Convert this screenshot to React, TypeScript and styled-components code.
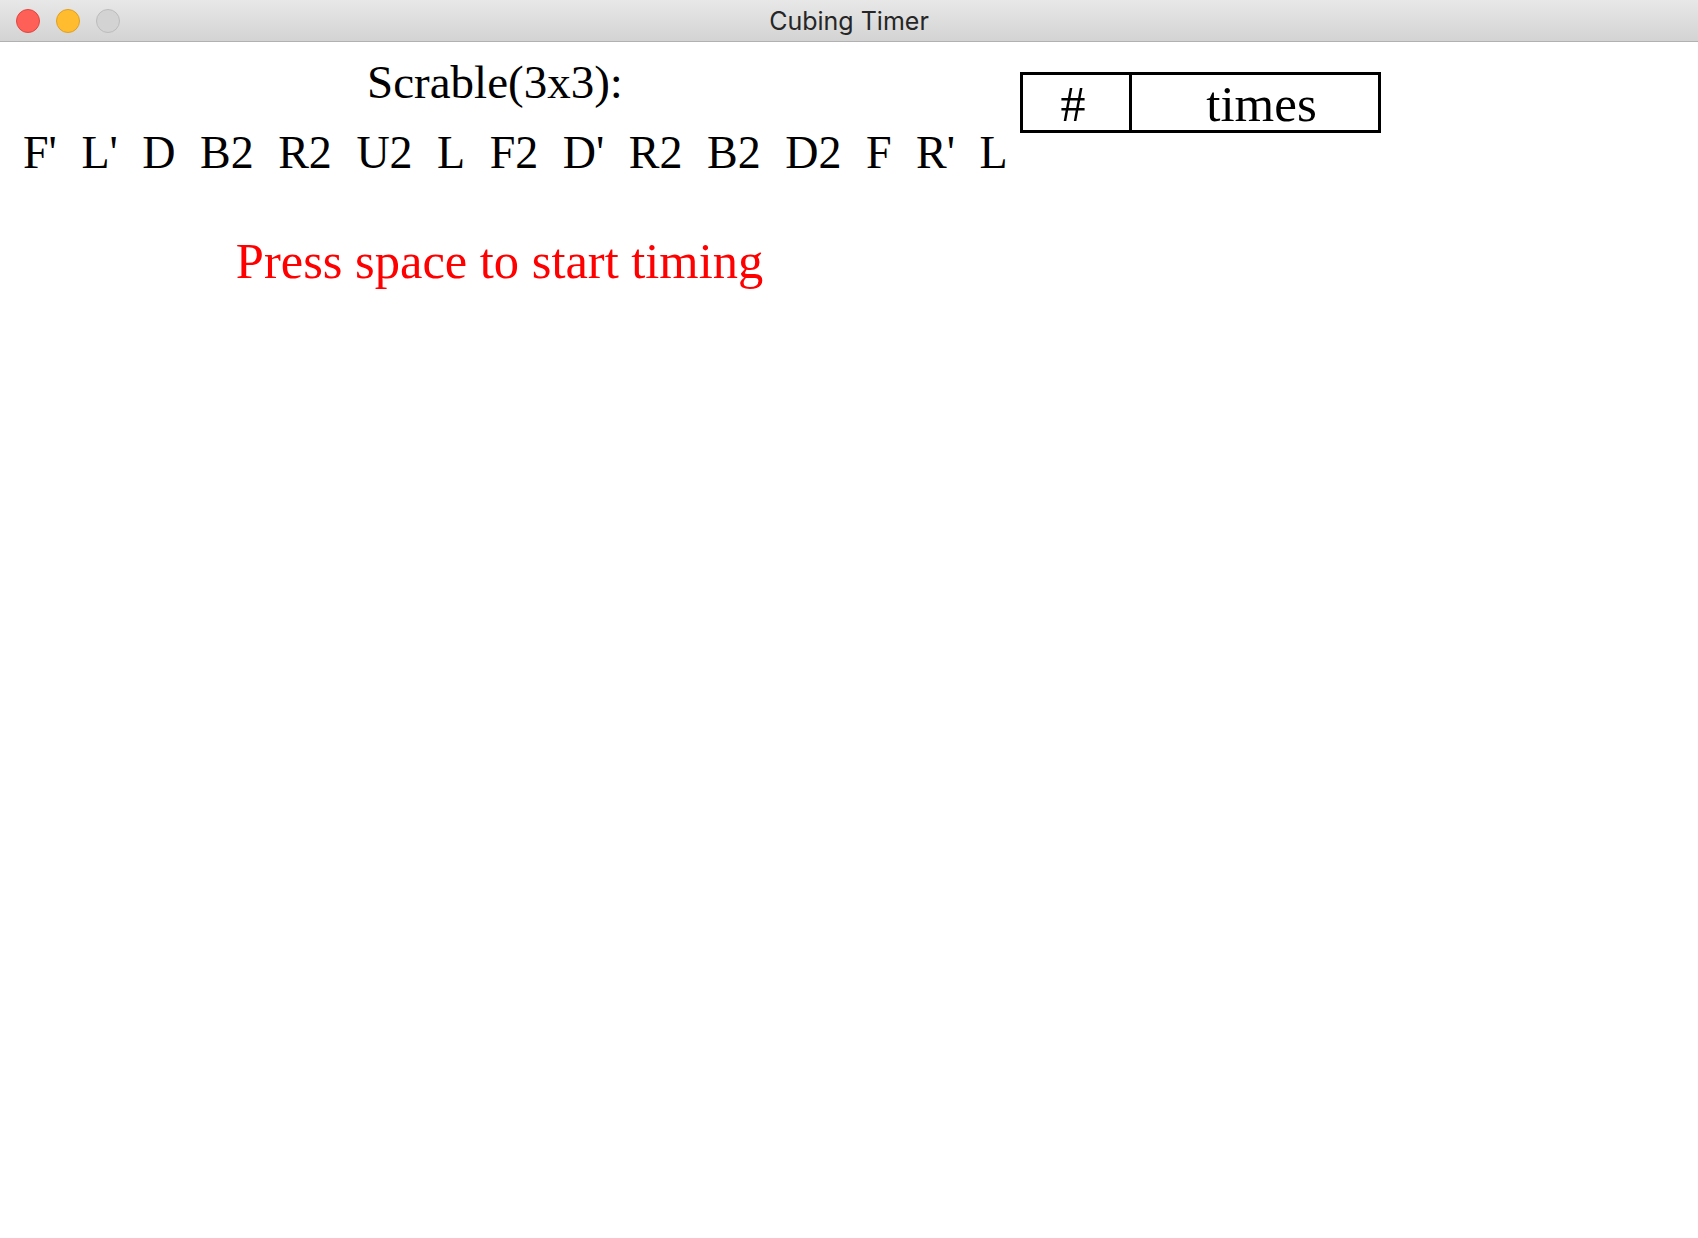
import React from "react";
import styled, { createGlobalStyle } from "styled-components";

const GlobalStyle = createGlobalStyle`
  html, body {
    margin: 0;
    padding: 0;
    background: #ffffff;
  }
  body {
    font-family: "Liberation Serif", "Times New Roman", serif;
    color: #000000;
  }
`;

const Window = styled.div`
  width: 1698px;
  height: 1238px;
  display: flex;
  flex-direction: column;
  background: #ffffff;
  overflow: hidden;
`;

const TitleBar = styled.div`
  flex: none;
  height: 41px;
  display: grid;
  grid-template-columns: 1fr auto 1fr;
  align-items: center;
  background: linear-gradient(#e8e8e8, #d3d3d3);
  border-bottom: 1px solid #b1b1b1;
`;

const Lights = styled.div`
  display: flex;
  gap: 16px;
  padding-left: 16px;
`;

const Light = styled.span<{ $fill: string; $edge: string }>`
  width: 24px;
  height: 24px;
  border-radius: 50%;
  box-sizing: border-box;
  background: ${(p) => p.$fill};
  border: 1px solid ${(p) => p.$edge};
`;

const WindowTitle = styled.div`
  font-family: Inter, "Noto Sans", sans-serif;
  font-size: 25px;
  color: #262626;
  padding-top: 1px;
`;

const Content = styled.div`
  display: flex;
  align-items: flex-start;
`;

const ScramblePanel = styled.div`
  width: 990px;
  display: flex;
  flex-direction: column;
`;

const ScrambleLabel = styled.div`
  margin-top: 17px;
  font-size: 47px;
  line-height: 47px;
  text-align: center;
`;

const Moves = styled.div`
  margin-top: 24px;
  padding-left: 23px;
  display: flex;
  gap: 24.5px;
  font-size: 46px;
  line-height: 46px;
  white-space: nowrap;
`;

const Move = styled.span``;

const Prompt = styled.div`
  margin-top: 60px;
  padding-left: 9px;
  font-size: 50.5px;
  line-height: 50px;
  color: #ff0000;
  text-align: center;
`;

const TimesTable = styled.div`
  margin-top: 30px;
  margin-left: 30px;
  display: grid;
  grid-template-columns: 106px 249px;
  border: 3px solid #000000;
`;

const HeaderCell = styled.div<{ $divider?: boolean }>`
  height: 55px;
  padding-top: 2px;
  padding-left: ${(p) => (p.$divider ? "13px" : "0")};
  padding-right: ${(p) => (p.$divider ? "0" : "6px")};
  box-sizing: border-box;
  display: flex;
  align-items: center;
  justify-content: center;
  font-size: ${(p) => (p.$divider ? "51px" : "50px")};
  line-height: 48px;
  border-left: ${(p) => (p.$divider ? "3px solid #000000" : "none")};
`;

const scramble = ["F'", "L'", "D", "B2", "R2", "U2", "L", "F2", "D'", "R2", "B2", "D2", "F", "R'", "L"];

export default function App() {
  return (
    <>
      <GlobalStyle />
      <Window>
        <TitleBar>
          <Lights>
            <Light $fill="#fe5f57" $edge="#e1463f" />
            <Light $fill="#febc2e" $edge="#dfa023" />
            <Light $fill="#d3d3d3" $edge="#bcbcbc" />
          </Lights>
          <WindowTitle>Cubing Timer</WindowTitle>
          <div />
        </TitleBar>
        <Content>
          <ScramblePanel>
            <ScrambleLabel>Scrable(3x3):</ScrambleLabel>
            <Moves>
              {scramble.map((m, i) => (
                <Move key={i}>{m}</Move>
              ))}
            </Moves>
            <Prompt>Press space to start timing</Prompt>
          </ScramblePanel>
          <TimesTable>
            <HeaderCell>#</HeaderCell>
            <HeaderCell $divider>times</HeaderCell>
          </TimesTable>
        </Content>
      </Window>
    </>
  );
}
